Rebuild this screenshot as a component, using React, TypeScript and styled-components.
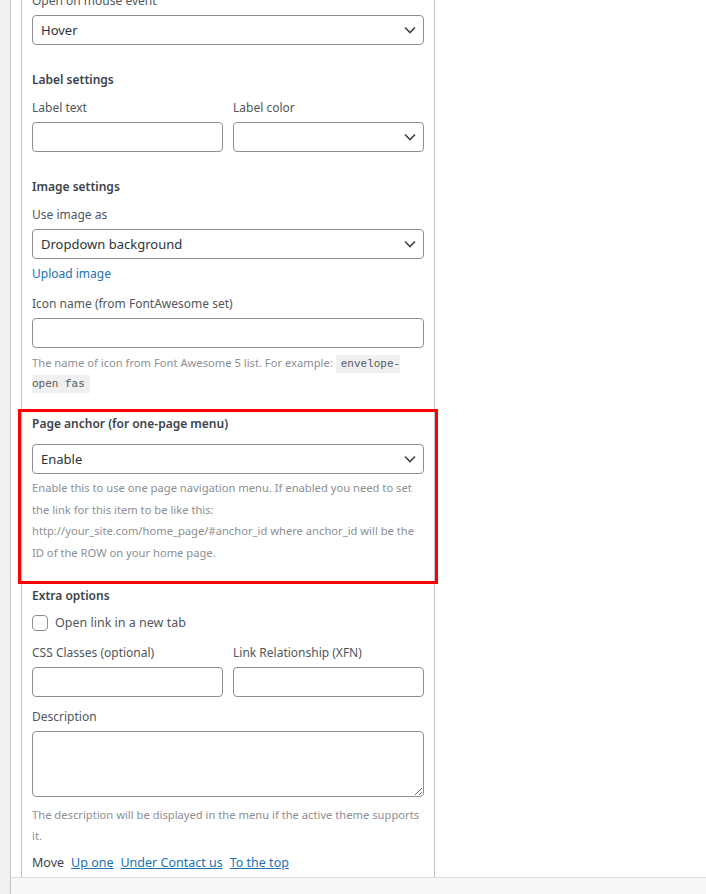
import React from 'react';
import styled, { createGlobalStyle } from 'styled-components';

const GlobalStyle = createGlobalStyle`
  html, body {
    margin: 0;
    padding: 0;
    height: 100%;
  }
  body {
    font-family: "Noto Sans", "Open Sans", sans-serif;
    font-size: 12px;
    color: #3c434a;
    background: #fff;
  }
  #root {
    height: 100%;
  }
`

const Screen = styled.div`
  display: flex;
  height: 100vh;
`

const Gutter = styled.div`
  flex: none;
  width: 10px;
  background: #f0f0f1;
  border-right: 1px solid #c3c4c7;
`

const Column = styled.div`
  flex: 1;
  min-width: 0;
  display: flex;
  flex-direction: column;
`

const Viewport = styled.div`
  flex: 1;
  display: flex;
  overflow: hidden;
  background: #fff;
`

const Footer = styled.div`
  flex: none;
  height: 16px;
  background: #f6f7f7;
  border-top: 1px solid #dcdcde;
`

// the settings box is scrolled a little, so its first label is cut off at the top
const Panel = styled.div`
  flex: none;
  width: 392px;
  margin: -10px 0 0 10px;
  padding: 0 10px;
  border-left: 1px solid #c3c4c7;
  border-right: 1px solid #c3c4c7;
`

const SectionTitle = styled.div<{ $top?: number }>`
  margin-top: ${p => p.$top ?? 24}px;
  padding-top: 2px;
  font-size: 12px;
  font-weight: 600;
  line-height: 18px;
  color: #3c434a;
`

const Field = styled.div<{ $top?: number }>`
  margin-top: ${p => p.$top ?? 0}px;
`

const TwoCols = styled.div<{ $top?: number }>`
  margin-top: ${p => p.$top ?? 0}px;
  display: grid;
  grid-template-columns: 1fr 1fr;
  column-gap: 10px;
`

const FieldLabel = styled.label`
  display: block;
  padding-top: 2px;
  font-size: 12px;
  line-height: 18px;
  margin-bottom: 5px;
  color: #50575e;
`

const SelectWrap = styled.div<{ $top?: number }>`
  position: relative;
  margin-top: ${p => p.$top ?? 0}px;
`

const SelectBox = styled.select`
  display: block;
  appearance: none;
  width: 100%;
  height: 30px;
  box-sizing: border-box;
  border: 1px solid #8c8f94;
  border-radius: 4px;
  padding: 0 24px 0 8px;
  background: #fff;
  font-family: "Noto Sans", sans-serif;
  font-size: 13px;
  color: #2c3338;
`

const Chevron = styled.svg`
  position: absolute;
  right: 6px;
  top: 7px;
  pointer-events: none;
`

const TextInput = styled.input`
  display: block;
  width: 100%;
  height: 30px;
  box-sizing: border-box;
  border: 1px solid #8c8f94;
  border-radius: 4px;
  padding: 0 8px;
  background: #fff;
  font-family: "Noto Sans", sans-serif;
  font-size: 13px;
`

const TextArea = styled.textarea`
  display: block;
  width: 100%;
  height: 66px;
  box-sizing: border-box;
  border: 1px solid #8c8f94;
  border-radius: 4px;
  padding: 4px 8px;
  font-family: "Noto Sans", sans-serif;
  font-size: 13px;
  resize: vertical;
`

const LinkButton = styled.a<{ $top?: number }>`
  display: inline-block;
  margin-top: ${p => p.$top ?? 0}px;
  padding-top: 1px;
  font-size: 12px;
  line-height: 19px;
  color: #2271b1;
  text-decoration: none;
`

const Hint = styled.p<{ $top: number; $lh: number }>`
  margin: ${p => p.$top}px 0 0;
  font-size: 11.2px;
  line-height: ${p => p.$lh}px;
  color: #8c8f94;
`

const Code = styled.code`
  padding: 3px 5px;
  background: #f0f0f1;
  font-family: "Liberation Mono", monospace;
  font-size: 11px;
  line-height: 1;
  color: #50575e;
`

const Highlight = styled.div`
  margin: 17px -14px 0;
  padding: 1px 11px 17px;
  border: 3px solid #ff0000;
`

const CheckRow = styled.label<{ $top?: number }>`
  display: flex;
  align-items: center;
  gap: 7px;
  margin-top: ${p => p.$top ?? 0}px;
  font-size: 12.5px;
  line-height: 20px;
  color: #50575e;
`

const CheckBox = styled.input`
  appearance: none;
  margin: 0;
  width: 16px;
  height: 16px;
  border: 1px solid #8c8f94;
  border-radius: 4px;
  background: #fff;
`

const MoveRow = styled.div<{ $top?: number }>`
  display: flex;
  gap: 7px;
  margin-top: ${p => p.$top ?? 0}px;
  line-height: 20px;
  font-size: 12.5px;
  color: #3c434a;
`

const MoveLink = styled.a`
  color: #2271b1;
  text-decoration: underline;
`

const Select = ({ value, top }: { value: string, top?: number }) => (
    <SelectWrap $top={top}>
        <SelectBox defaultValue={value}>
            <option value={value}>{value}</option>
        </SelectBox>
        <Chevron width="16" height="16" viewBox="0 0 16 16">
            <path d="M3 5.5 L8 10.5 L13 5.5" fill="none" stroke="#3c434a" strokeWidth="1.6" />
        </Chevron>
    </SelectWrap>
)

export default function App() {
    return (
        <>
            <GlobalStyle />
            <Screen>
                <Gutter />
                <Column>
                    <Viewport>
                        <Panel>
                            <Field>
                                <FieldLabel>Open on mouse event</FieldLabel>
                                <Select value="Hover" />
                            </Field>

                            <SectionTitle>Label settings</SectionTitle>
                            <TwoCols $top={8}>
                                <Field>
                                    <FieldLabel>Label text</FieldLabel>
                                    <TextInput />
                                </Field>
                                <Field>
                                    <FieldLabel>Label color</FieldLabel>
                                    <Select value="" />
                                </Field>
                            </TwoCols>

                            <SectionTitle>Image settings</SectionTitle>
                            <Field $top={8}>
                                <FieldLabel>Use image as</FieldLabel>
                                <Select value="Dropdown background" />
                            </Field>
                            <LinkButton href="#" $top={4}>Upload image</LinkButton>
                            <Field $top={10}>
                                <FieldLabel>Icon name (from FontAwesome set)</FieldLabel>
                                <TextInput />
                            </Field>
                            <Hint $top={5} $lh={19.5}>
                                The name of icon from Font Awesome 5 list. For example: <Code>envelope-open fas</Code>
                            </Hint>

                            <Highlight>
                                <SectionTitle $top={0}>Page anchor (for one-page menu)</SectionTitle>
                                <Select value="Enable" top={11} />
                                <Hint $top={3} $lh={21.7}>
                                    Enable this to use one page navigation menu. If enabled you need to set the link for this item to be like this: http://your_site.com/home_page/#anchor_id where anchor_id will be the ID of the ROW on your home page.
                                </Hint>
                            </Highlight>

                            <SectionTitle $top={1}>Extra options</SectionTitle>
                            <CheckRow $top={8}>
                                <CheckBox type="checkbox" />
                                Open link in a new tab
                            </CheckRow>
                            <TwoCols $top={9}>
                                <Field>
                                    <FieldLabel>CSS Classes (optional)</FieldLabel>
                                    <TextInput />
                                </Field>
                                <Field>
                                    <FieldLabel>Link Relationship (XFN)</FieldLabel>
                                    <TextInput />
                                </Field>
                            </TwoCols>
                            <Field $top={9}>
                                <FieldLabel>Description</FieldLabel>
                                <TextArea />
                            </Field>
                            <Hint $top={7} $lh={21}>
                                The description will be displayed in the menu if the active theme supports it.
                            </Hint>
                            <MoveRow $top={7}>
                                Move
                                <MoveLink href="#">Up one</MoveLink>
                                <MoveLink href="#">Under Contact us</MoveLink>
                                <MoveLink href="#">To the top</MoveLink>
                            </MoveRow>
                        </Panel>
                    </Viewport>
                    <Footer />
                </Column>
            </Screen>
        </>
    )
}
